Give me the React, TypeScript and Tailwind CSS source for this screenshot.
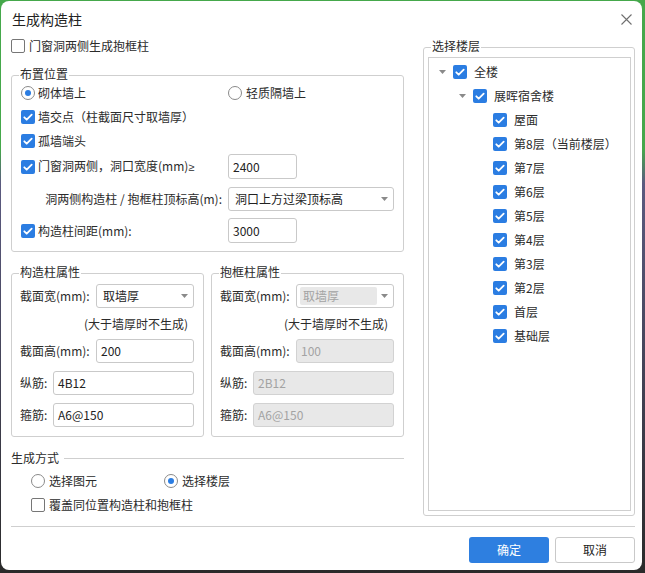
import clsx from 'clsx';
import type { ReactNode } from 'react';

const Checkbox = ({ checked }: { checked?: boolean }) =>
  checked ? (
    <span className="flex h-[14px] w-[14px] shrink-0 items-center justify-center rounded-[2px] bg-[#2b7de2]">
      <svg viewBox="0 0 14 14" className="h-[14px] w-[14px]">
        <path
          d="M3.3 7.3l2.4 2.4 5-5.1"
          fill="none"
          stroke="#fff"
          strokeWidth="1.8"
          strokeLinecap="round"
          strokeLinejoin="round"
        />
      </svg>
    </span>
  ) : (
    <span className="h-[14px] w-[14px] shrink-0 rounded-[2px] border border-[#767676] bg-white" />
  );

const Radio = ({ checked }: { checked?: boolean }) => (
  <span className="flex h-[14px] w-[14px] shrink-0 items-center justify-center rounded-full border border-[#8a8a8a] bg-white">
    {checked && <span className="h-[6px] w-[6px] rounded-full bg-[#2b7de2]" />}
  </span>
);

const Caret = ({ className }: { className?: string }) => (
  <svg width="7" height="4" viewBox="0 0 7 4" className={className}>
    <path d="M0 0h7L3.5 4z" fill="#8a8a8a" />
  </svg>
);

const Field = ({ value, disabled, className }: { value: string; disabled?: boolean; className?: string }) => (
  <div
    className={clsx(
      'flex h-[24px] items-center rounded-[3px] border pl-[4px]',
      disabled ? 'border-[#d2d2d2] bg-[#e8e8e8] text-[#a3a3a3]' : 'border-[#c9c9c9] bg-white text-[#222]',
      className
    )}
  >
    {value}
  </div>
);

const Select = ({ value, disabled, className }: { value: string; disabled?: boolean; className?: string }) => (
  <div
    className={clsx(
      'flex h-[24px] items-center rounded-[3px] border border-[#c9c9c9] bg-white',
      disabled ? 'py-[2px] pl-[3px]' : 'pl-[6px]',
      className
    )}
  >
    {disabled ? (
      <div className="flex h-full flex-1 items-center rounded-[2px] bg-[#e8e8e8] pl-[3px] text-[#a3a3a3]">{value}</div>
    ) : (
      <div className="flex-1 text-[#222]">{value}</div>
    )}
    <Caret className={disabled ? 'ml-[4px] mr-[5px]' : 'mr-[5px]'} />
  </div>
);

const Group = ({ title, className, children }: { title: string; className?: string; children: ReactNode }) => (
  <div className={clsx('relative rounded-[3px] border border-[#cfcfcf]', className)}>
    <span className="absolute -top-[10px] left-[7px] bg-white px-px leading-[16px] text-[#2b2b2b]">{title}</span>
    {children}
  </div>
);

const Attr = ({ title, disabled, values }: { title: string; disabled?: boolean; values: string[] }) => (
  <Group title={title} className="w-[193px] pb-[9px] pl-[8px] pr-[9px] pt-[10px]">
    <div className="flex h-[24px] items-center">
      <span className="w-[76px] shrink-0">截面宽(mm):</span>
      <Select value="取墙厚" disabled={disabled} className="flex-1" />
    </div>
    <div className="mt-[8px] h-[16px] pr-[6px] text-right leading-[16px]">(大于墙厚时不生成)</div>
    <div className="mt-[7px] flex h-[24px] items-center">
      <span className="w-[76px] shrink-0">截面高(mm):</span>
      <Field value={values[0]} disabled={disabled} className="flex-1" />
    </div>
    <div className="mt-[8px] flex h-[24px] items-center">
      <span className="w-[33px] shrink-0">纵筋:</span>
      <Field value={values[1]} disabled={disabled} className="flex-1" />
    </div>
    <div className="mt-[8px] flex h-[24px] items-center">
      <span className="w-[33px] shrink-0">箍筋:</span>
      <Field value={values[2]} disabled={disabled} className="flex-1" />
    </div>
  </Group>
);

const floors = ['屋面', '第8层（当前楼层）', '第7层', '第6层', '第5层', '第4层', '第3层', '第2层', '首层', '基础层'];

export default function App() {
  return (
    <div className="h-[573px] w-[645px] overflow-hidden bg-[linear-gradient(to_bottom,#45a84b_0%,#45a84b_26%,#5b5a80_32%,#2a2a2a_100%)] pl-px pt-px font-['Noto_Sans_CJK_SC','Noto_Sans',sans-serif] text-[12px] text-[#2b2b2b]">
      <div className="flex h-[569px] w-[641px] flex-col rounded-[8px] bg-white pl-[10px] pr-[7px]">
        {/* title bar */}
        <div className="flex h-[37px] shrink-0 items-center justify-between">
          <span className="pl-px text-[14px] text-[#222]">生成构造柱</span>
          <svg width="11" height="11" viewBox="0 0 11 11" className="mr-[3px]">
            <path d="M0.5 0.5l10 10M10.5 0.5l-10 10" stroke="#6f6f6f" strokeWidth="1.1" />
          </svg>
        </div>

        <div className="flex gap-[19px]">
          {/* left */}
          <div className="flex w-[393px] flex-col">
            <div className="flex h-[16px] items-center gap-[4px]">
              <Checkbox />
              门窗洞两侧生成抱框柱
            </div>

            <Group title="布置位置" className="mt-[21px] pb-[8px] pl-[9px] pr-[9px] pt-[5px]">
              <div className="flex h-[24px] items-center">
                <div className="flex w-[207px] items-center gap-[3px]">
                  <Radio checked />
                  砌体墙上
                </div>
                <div className="flex items-center gap-[4px]">
                  <Radio />
                  轻质隔墙上
                </div>
              </div>
              <div className="flex h-[24px] items-center gap-[3px]">
                <Checkbox checked />
                墙交点（柱截面尺寸取墙厚）
              </div>
              <div className="flex h-[24px] items-center gap-[3px]">
                <Checkbox checked />
                孤墙端头
              </div>
              <div className="mt-px flex h-[25px] items-center">
                <div className="flex w-[207px] items-center gap-[3px]">
                  <Checkbox checked />
                  <span>
                    门窗洞两侧，洞口宽度(mm)<span className="font-['Noto_Sans',sans-serif] text-[11px]">≥</span>
                  </span>
                </div>
                <Field value="2400" className="h-[25px] w-[69px]" />
              </div>
              <div className="mt-[8px] flex h-[24px] items-center">
                <div className="w-[207px] pr-[6px] text-right">洞两侧构造柱 / 抱框柱顶标高(m):</div>
                <Select value="洞口上方过梁顶标高" className="flex-1" />
              </div>
              <div className="mt-[7px] flex h-[25px] items-center">
                <div className="flex w-[207px] items-center gap-[3px]">
                  <Checkbox checked />
                  构造柱间距(mm):
                </div>
                <Field value="3000" className="h-[25px] w-[69px]" />
              </div>
            </Group>

            <div className="mt-[21px] flex gap-[7px]">
              <Attr title="构造柱属性" values={['200', '4B12', 'A6@150']} />
              <Attr title="抱框柱属性" disabled values={['100', '2B12', 'A6@150']} />
            </div>

            <div className="mt-[13px] flex h-[16px] items-center gap-[5px]">
              <span>生成方式</span>
              <div className="h-px flex-1 bg-[#cfcfcf]" />
            </div>
            <div className="mt-[7px] flex h-[16px] items-center pl-[20px]">
              <div className="flex w-[133px] items-center gap-[4px]">
                <Radio />
                选择图元
              </div>
              <div className="flex items-center gap-[4px]">
                <Radio checked />
                选择楼层
              </div>
            </div>
            <div className="mt-[8px] flex h-[16px] items-center gap-[4px] pl-[20px]">
              <Checkbox />
              覆盖同位置构造柱和抱框柱
            </div>
          </div>

          {/* right */}
          <Group title="选择楼层" className="mt-[9px] h-[469px] w-[212px] pb-[4px] pl-[4px] pr-[3px] pt-[9px]">
            <div className="h-full border border-[#cfcfcf] pt-[2px]">
              <div className="flex h-[24px] items-center pl-[10px]">
                <Caret className="mr-[7px]" />
                <Checkbox checked />
                <span className="ml-[7px]">全楼</span>
              </div>
              <div className="flex h-[24px] items-center pl-[30px]">
                <Caret className="mr-[7px]" />
                <Checkbox checked />
                <span className="ml-[7px]">展晖宿舍楼</span>
              </div>
              {floors.map(f => (
                <div key={f} className="flex h-[24px] items-center pl-[64px]">
                  <Checkbox checked />
                  <span className="ml-[7px]">{f}</span>
                </div>
              ))}
            </div>
          </Group>
        </div>

        {/* footer */}
        <div className="mt-[10px] h-px bg-[#cfcfcf]" />
        <div className="mt-[10px] flex justify-end gap-[6px]">
          <button className="h-[26px] w-[80px] rounded-[3px] bg-[#2e7fe0] text-[12px] text-white">确定</button>
          <button className="h-[26px] w-[80px] rounded-[3px] border border-[#c9c9c9] bg-white text-[12px] text-[#222]">
            取消
          </button>
        </div>
      </div>
    </div>
  );
}
